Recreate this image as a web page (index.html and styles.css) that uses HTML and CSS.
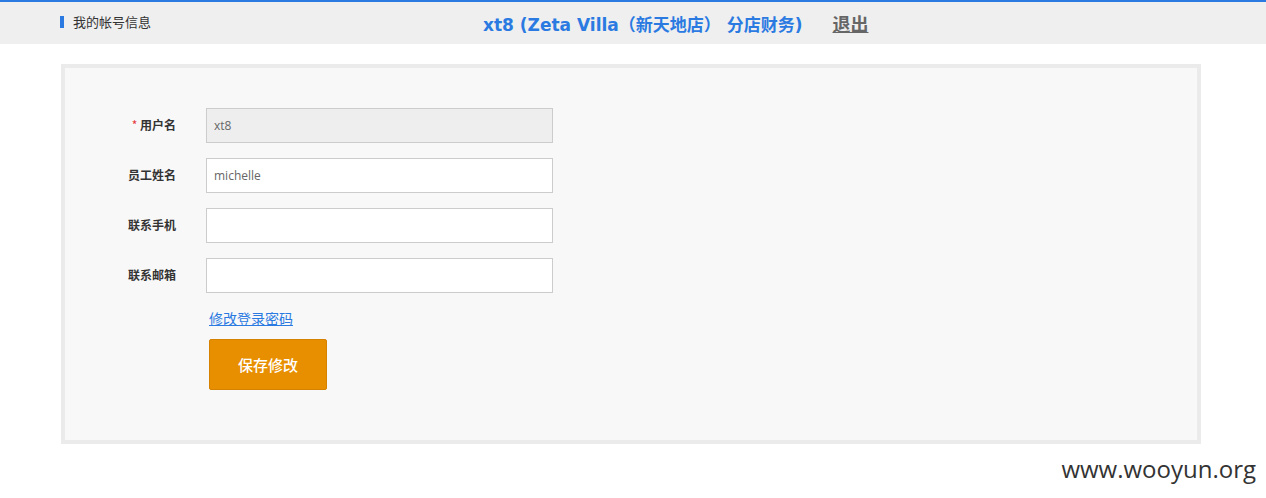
FILE: index.html
```html
<!DOCTYPE html>
<html lang="zh">
<head>
<meta charset="utf-8">
<title>我的帐号信息</title>
<link rel="stylesheet" href="styles.css">
</head>
<body>
<header class="topbar">
  <div class="crumb"><span class="marker"></span><span>我的帐号信息</span></div>
  <div class="title">xt8 (Zeta Villa（新天地店） 分店财务)</div>
  <a class="logout" href="#">退出</a>
</header>
<main class="panel">
  <form class="form">
    <div class="row">
      <label class="label"><span class="req">*</span> 用户名</label>
      <input class="field disabled" type="text" value="xt8" disabled>
    </div>
    <div class="row">
      <label class="label">员工姓名</label>
      <input class="field" type="text" value="michelle">
    </div>
    <div class="row">
      <label class="label">联系手机</label>
      <input class="field" type="text" value="">
    </div>
    <div class="row">
      <label class="label">联系邮箱</label>
      <input class="field" type="text" value="">
    </div>
    <div class="actions">
      <a class="pwlink" href="#">修改登录密码</a>
      <button class="save" type="button">保存修改</button>
    </div>
  </form>
</main>
<div class="watermark">www.wooyun.org</div>
</body>
</html>
```
FILE: styles.css
```css
* { box-sizing: border-box; }
body {
  margin: 0;
  background: #fff;
  font-family: "DejaVu Sans", "Noto Sans CJK SC", sans-serif;
  color: #333;
}
.topbar {
  border-top: 2px solid #2a7ae2;
  background: #efefef;
  height: 44px;
  display: flex;
  align-items: center;
}
.crumb {
  width: 483px;
  padding-left: 60px;
  margin-bottom: 3px;
  display: flex;
  align-items: center;
  font-size: 13px;
  font-family: "Noto Sans CJK SC", sans-serif;
  color: #333;
}
.marker {
  display: inline-block;
  width: 4px;
  height: 12px;
  background: #2a7ae2;
  margin-right: 9px;
}
.title {
  font-size: 17px;
  font-weight: bold;
  color: #2a7ae2;
  font-family: "DejaVu Sans", "Noto Sans CJK SC", sans-serif;
}
.logout {
  margin-left: 30px;
  font-size: 18px;
  font-weight: bold;
  color: #666;
  font-family: "Noto Sans CJK SC", sans-serif;
  text-decoration: underline;
}
.panel {
  margin: 20px 0 0 61px;
  width: 1140px;
  height: 380px;
  border: 4px solid #ebebeb;
  background: #f8f8f8;
  padding-top: 40px;
}
.form {
  display: flex;
  flex-direction: column;
  gap: 15px;
}
.row {
  display: flex;
  align-items: center;
  gap: 30px;
}
.label {
  width: 111px;
  text-align: right;
  font-size: 12px;
  font-weight: bold;
  color: #333;
  font-family: "Noto Sans CJK SC", sans-serif;
  margin-bottom: 2px;
}
.req { color: #e4393c; font-weight: normal; }
.field {
  width: 347px;
  height: 35px;
  border: 1px solid #ccc;
  background: #fff;
  padding: 0 7px;
  font-size: 12px;
  font-family: "Open Sans", "Noto Sans CJK SC", sans-serif;
  color: #666;
  outline: none;
}
.field.disabled { background: #eee; color: #666; }
.actions {
  margin-left: 144px;
  display: flex;
  flex-direction: column;
  align-items: flex-start;
  gap: 11px;
  padding-top: 0;
}
.pwlink {
  font-size: 14px;
  color: #2a7ae2;
  text-decoration: underline;
  font-family: "Noto Sans CJK SC", sans-serif;
}
.save {
  width: 118px;
  height: 51px;
  background: #e88f00;
  border: 1px solid #d48200;
  border-radius: 2px;
  color: #fff;
  font-size: 15px;
  font-weight: 500;
  font-family: "Noto Sans CJK SC", sans-serif;
}
.watermark {
  text-align: right;
  padding-right: 10px;
  margin-top: 8px;
  font-size: 24px;
  font-family: "Open Sans", sans-serif;
  color: #333;
}
```
